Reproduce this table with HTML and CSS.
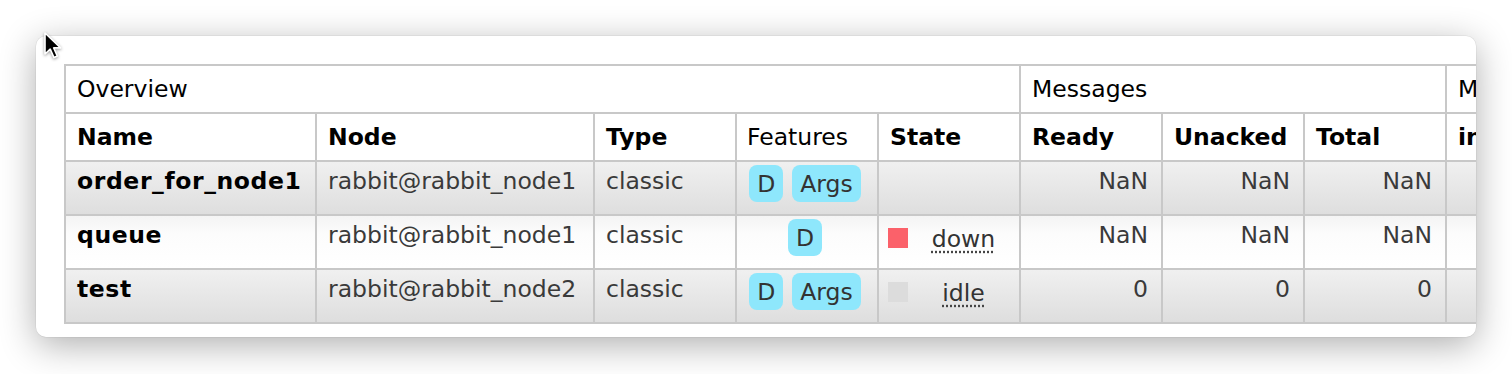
FILE: index.html
```html
<!DOCTYPE html>
<html>
<head>
<meta charset="utf-8">
<link rel="stylesheet" href="styles.css">
</head>
<body>
<div class="page">
  <div class="card">
    <table class="list">
      <colgroup>
        <col class="c-name"><col class="c-node"><col class="c-std"><col class="c-std"><col class="c-std"><col class="c-std"><col class="c-std"><col class="c-std"><col class="c-std">
      </colgroup>
      <thead>
        <tr class="grp">
          <th colspan="5">Overview</th>
          <th colspan="3">Messages</th>
          <th>Message rates</th>
        </tr>
        <tr class="hdr">
          <th>Name</th>
          <th>Node</th>
          <th>Type</th>
          <th class="plain">Features</th>
          <th>State</th>
          <th>Ready</th>
          <th>Unacked</th>
          <th>Total</th>
          <th>incoming</th>
        </tr>
      </thead>
      <tbody>
        <tr class="alt1">
          <td class="name">order_for_node1</td>
          <td>rabbit@rabbit_node1</td>
          <td>classic</td>
          <td class="feat"><div class="badges"><span class="badge">D</span><span class="badge">Args</span></div></td>
          <td></td>
          <td class="num">NaN</td>
          <td class="num">NaN</td>
          <td class="num">NaN</td>
          <td></td>
        </tr>
        <tr class="alt2">
          <td class="name">queue</td>
          <td>rabbit@rabbit_node1</td>
          <td>classic</td>
          <td class="feat"><div class="badges"><span class="badge">D</span></div></td>
          <td><div class="state"><span class="sq red"></span><abbr class="st">down</abbr></div></td>
          <td class="num">NaN</td>
          <td class="num">NaN</td>
          <td class="num">NaN</td>
          <td></td>
        </tr>
        <tr class="alt1">
          <td class="name">test</td>
          <td>rabbit@rabbit_node2</td>
          <td>classic</td>
          <td class="feat"><div class="badges"><span class="badge">D</span><span class="badge">Args</span></div></td>
          <td><div class="state"><span class="sq grey"></span><abbr class="st">idle</abbr></div></td>
          <td class="num">0</td>
          <td class="num">0</td>
          <td class="num">0</td>
          <td></td>
        </tr>
      </tbody>
    </table>
  </div>
  <svg class="cursor" width="22" height="30" viewBox="0 0 22 30">
    <path d="M2 2 L2 23 L7.2 18.2 L11 26.6 L14.4 25.1 L10.7 16.9 L17.6 16.9 Z" fill="#000" stroke="#fff" stroke-width="1.6" stroke-linejoin="round"/>
  </svg>
</div>
</body>
</html>
```

FILE: styles.css
```css
html, body {
  margin: 0;
  padding: 0;
  background: #ffffff;
}

.page {
  position: relative;
  padding: 36px;
  width: 1440px;
  height: 302px;
}

.card {
  width: 1440px;
  box-sizing: border-box;
  padding: 28px 0 13px 28px;
  background: #fff;
  border-radius: 10px;
  overflow: hidden;
  box-shadow: 0 8px 36px rgba(0, 0, 0, 0.32), 0 0 0 0.5px rgba(0, 0, 0, 0.08);
}

.list {
  border-collapse: separate;
  border-spacing: 0;
  table-layout: fixed;
  width: 1525px;
  border-top: 2px solid #c8c8c8;
  border-left: 2px solid #c8c8c8;
  font-family: "DejaVu Sans", Verdana, sans-serif;
  font-size: 23.5px;
  color: #000;
}

.c-name { width: 251px; }
.c-node { width: 278px; }
.c-std { width: 142px; }

.list th,
.list td {
  border-right: 2px solid #c8c8c8;
  border-bottom: 2px solid #c8c8c8;
  padding: 0 12px 0 11px;
  white-space: nowrap;
  overflow: hidden;
  text-align: left;
}

.list tr.grp { height: 48px; }
.list tr.hdr { height: 48px; }

.list th {
  vertical-align: middle;
  background: #fff;
}

.list tr.grp th { font-weight: normal; }
.list tr.hdr th { font-weight: bold; }
.list tr.hdr th.plain { font-weight: normal; padding-left: 10px; }

.list tbody tr { height: 54px; }

.list td {
  vertical-align: top;
  padding-top: 5px;
  line-height: 28px;
  color: #3a3a3a;
}

.list tr.alt1 td {
  background: linear-gradient(to bottom, #f0f0f0 0%, #dedede 100%);
}

.list tr.alt2 td {
  background: linear-gradient(to bottom, #f4f4f4 0%, #fcfcfc 35%, #ffffff 100%);
}

.list td.name {
  font-weight: bold;
  color: #000;
  letter-spacing: 0.6px;
}

.list td.num {
  text-align: right;
  padding-right: 13px;
}

.list td.feat {
  padding-top: 3px;
  padding-left: 6px;
  padding-right: 10px;
}

.badges {
  display: flex;
  justify-content: center;
  gap: 9px;
}

.badge {
  display: inline-block;
  height: 37px;
  line-height: 39px;
  padding: 0 8px;
  background: #8ee7fc;
  border-radius: 8px;
  color: #333;
}

.state {
  display: flex;
  align-items: center;
  height: 32px;
  padding-top: 2px;
  margin-left: -2px;
}

.sq {
  width: 20px;
  height: 20px;
  flex: none;
  margin-top: -2px;
}

.sq.red { background: #fb616a; }
.sq.grey { background: #dcdcdc; }

.st {
  flex: 1;
  text-align: center;
  margin-left: 8px;
  margin-right: -4px;
  color: #333;
  text-decoration: underline dotted #444;
  text-underline-offset: 4px;
  line-height: 28px;
}

.cursor {
  position: absolute;
  left: 43px;
  top: 31px;
  filter: drop-shadow(0 1px 1.5px rgba(0, 0, 0, 0.4));
}
```
